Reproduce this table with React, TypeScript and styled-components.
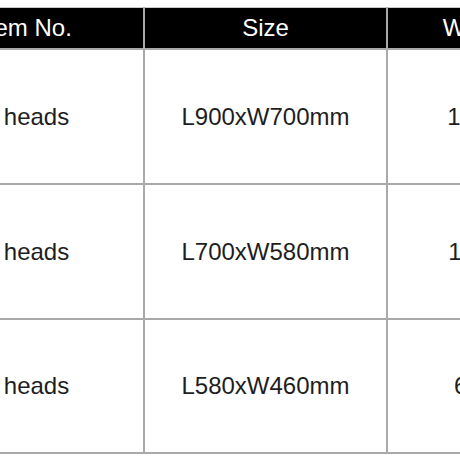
import * as React from "react"
import styled, { createGlobalStyle } from "styled-components"

const GlobalStyle = createGlobalStyle`
  html, body {
    margin: 0;
    padding: 0;
    background: #ffffff;
  }
  body {
    font-family: "Liberation Sans", Arial, sans-serif;
  }
`

const ScFrame = styled.div`
  width: 460px;
  height: 460px;
  overflow: hidden;
  padding-top: 7px;
  box-sizing: border-box;
  background: #ffffff;
`

const ScTable = styled.table`
  width: 664px;
  min-width: 664px;
  margin-left: -92px;
  border-collapse: collapse;
  table-layout: fixed;
  font-size: 24px;
  color: #1e1e1e;
`

const ScCol = styled.col<{ $width: number }>`
  width: ${(p) => p.$width}px;
`

const ScHeadCell = styled.th`
  height: 40px;
  padding: 0;
  background: #000000;
  color: #ffffff;
  font-weight: 400;
  text-align: center;
  white-space: nowrap;
  border-top: 1px solid #c8c8c8;
  border-left: 2px solid #a9a9a9;
  border-right: 2px solid #a9a9a9;
  border-bottom: 2px solid #a9a9a9;
`

const ScCell = styled.td<{ $height: number }>`
  height: ${(p) => p.$height}px;
  padding: 0;
  text-align: center;
  vertical-align: middle;
  white-space: nowrap;
  border: 2px solid #a9a9a9;
`

const columns = [
  { label: "Item No.", width: 235 },
  { label: "Size", width: 243 },
  { label: "Weight", width: 186 },
]

const rows = [
  { item: "4 heads", size: "L900xW700mm", weight: "125kg", height: 133 },
  { item: "3 heads", size: "L700xW580mm", weight: "110kg", height: 133 },
  { item: "2 heads", size: "L580xW460mm", weight: "65kg", height: 132 },
]

const App: React.FC = () => {
  return (
    <>
      <GlobalStyle />
      <ScFrame>
        <ScTable>
          <colgroup>
            {columns.map((c) => (
              <ScCol key={c.label} $width={c.width} />
            ))}
          </colgroup>
          <thead>
            <tr>
              {columns.map((c) => (
                <ScHeadCell key={c.label}>{c.label}</ScHeadCell>
              ))}
            </tr>
          </thead>
          <tbody>
            {rows.map((r) => (
              <tr key={r.size}>
                <ScCell $height={r.height}>{r.item}</ScCell>
                <ScCell $height={r.height}>{r.size}</ScCell>
                <ScCell $height={r.height}>{r.weight}</ScCell>
              </tr>
            ))}
          </tbody>
        </ScTable>
      </ScFrame>
    </>
  )
}

export default App
